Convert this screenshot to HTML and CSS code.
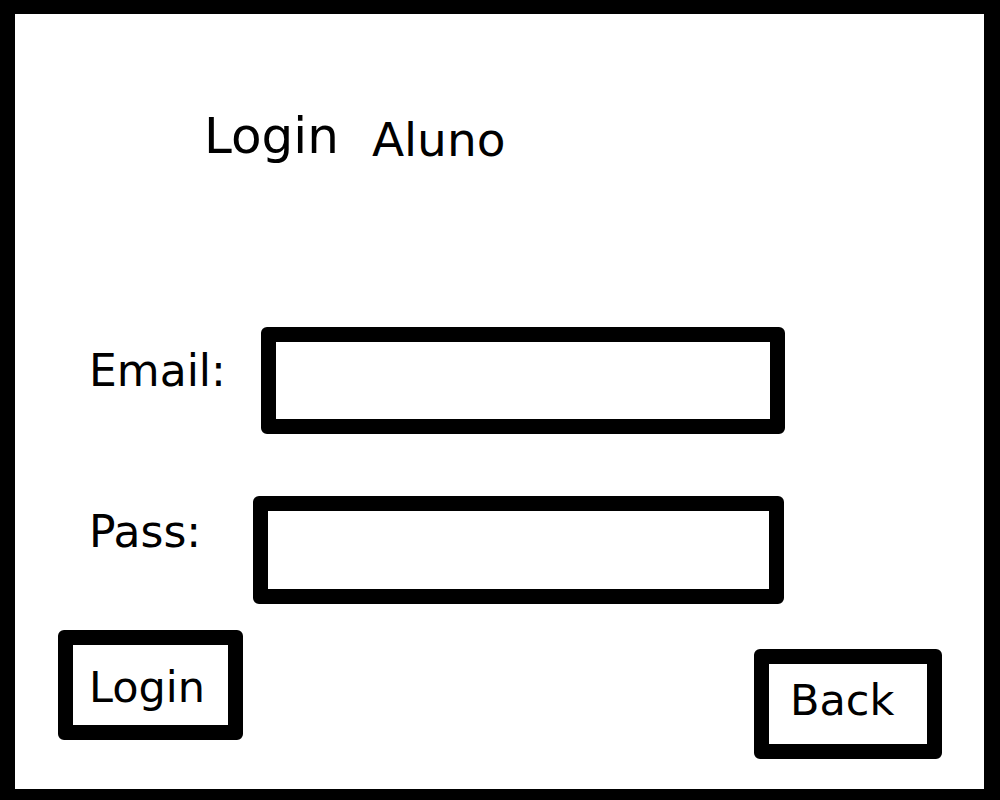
FILE: index.html
```html
<!DOCTYPE html>
<html lang="pt">
<head>
<meta charset="utf-8">
<title>Login Aluno</title>
<link rel="stylesheet" href="styles.css">
</head>
<body>
<div class="frame">
  <div class="title">
    <span class="title-main">Login</span>
    <span class="title-sub">Aluno</span>
  </div>
  <div class="field field-email">
    <label class="label label-email">Email:</label>
    <div class="box box-email"></div>
  </div>
  <div class="field field-pass">
    <label class="label label-pass">Pass:</label>
    <div class="box box-pass"></div>
  </div>
  <div class="actions">
    <div class="btn btn-login">Login</div>
    <div class="btn btn-back">Back</div>
  </div>
</div>
</body>
</html>
```

FILE: styles.css
```css
html, body {
  margin: 0;
  padding: 0;
  background: #fff;
}

body {
  font-family: "DejaVu Sans", Verdana, sans-serif;
  color: #000;
}

.frame {
  box-sizing: border-box;
  width: 1000px;
  height: 800px;
  border-style: solid;
  border-color: #000;
  border-width: 14px 16px 11px 15px;
  display: flex;
  flex-direction: column;
}

.title {
  display: flex;
  align-items: flex-start;
  height: 52px;
  margin-top: 97px;
  padding-left: 189px;
}

.title-main {
  font-size: 50px;
  line-height: 50px;
}

.title-sub {
  font-size: 47px;
  line-height: 47px;
  margin-left: 33px;
  margin-top: 5px;
}

.field {
  display: flex;
  align-items: flex-start;
  padding-left: 74px;
}

.field-email {
  margin-top: 164px;
}

.field-pass {
  margin-top: 62px;
}

.label {
  font-size: 44px;
  line-height: 44px;
}

.label-email {
  width: 172px;
  margin-top: 22px;
}

.label-pass {
  width: 164px;
  margin-top: 14px;
}

.box {
  box-sizing: border-box;
  border: 15px solid #000;
  border-radius: 6px;
}

.box-email {
  width: 524px;
  height: 107px;
}

.box-pass {
  width: 531px;
  height: 108px;
}

.actions {
  display: flex;
  justify-content: space-between;
  align-items: flex-start;
  margin-top: 26px;
  padding: 0 42px 0 43px;
}

.btn {
  box-sizing: border-box;
  border: 15px solid #000;
  border-radius: 6px;
  height: 110px;
  font-size: 43px;
  line-height: 43px;
}

.btn-login {
  width: 185px;
  padding: 21px 0 0 16px;
}

.btn-back {
  width: 188px;
  margin-top: 19px;
  padding: 15px 0 0 21px;
}
```
